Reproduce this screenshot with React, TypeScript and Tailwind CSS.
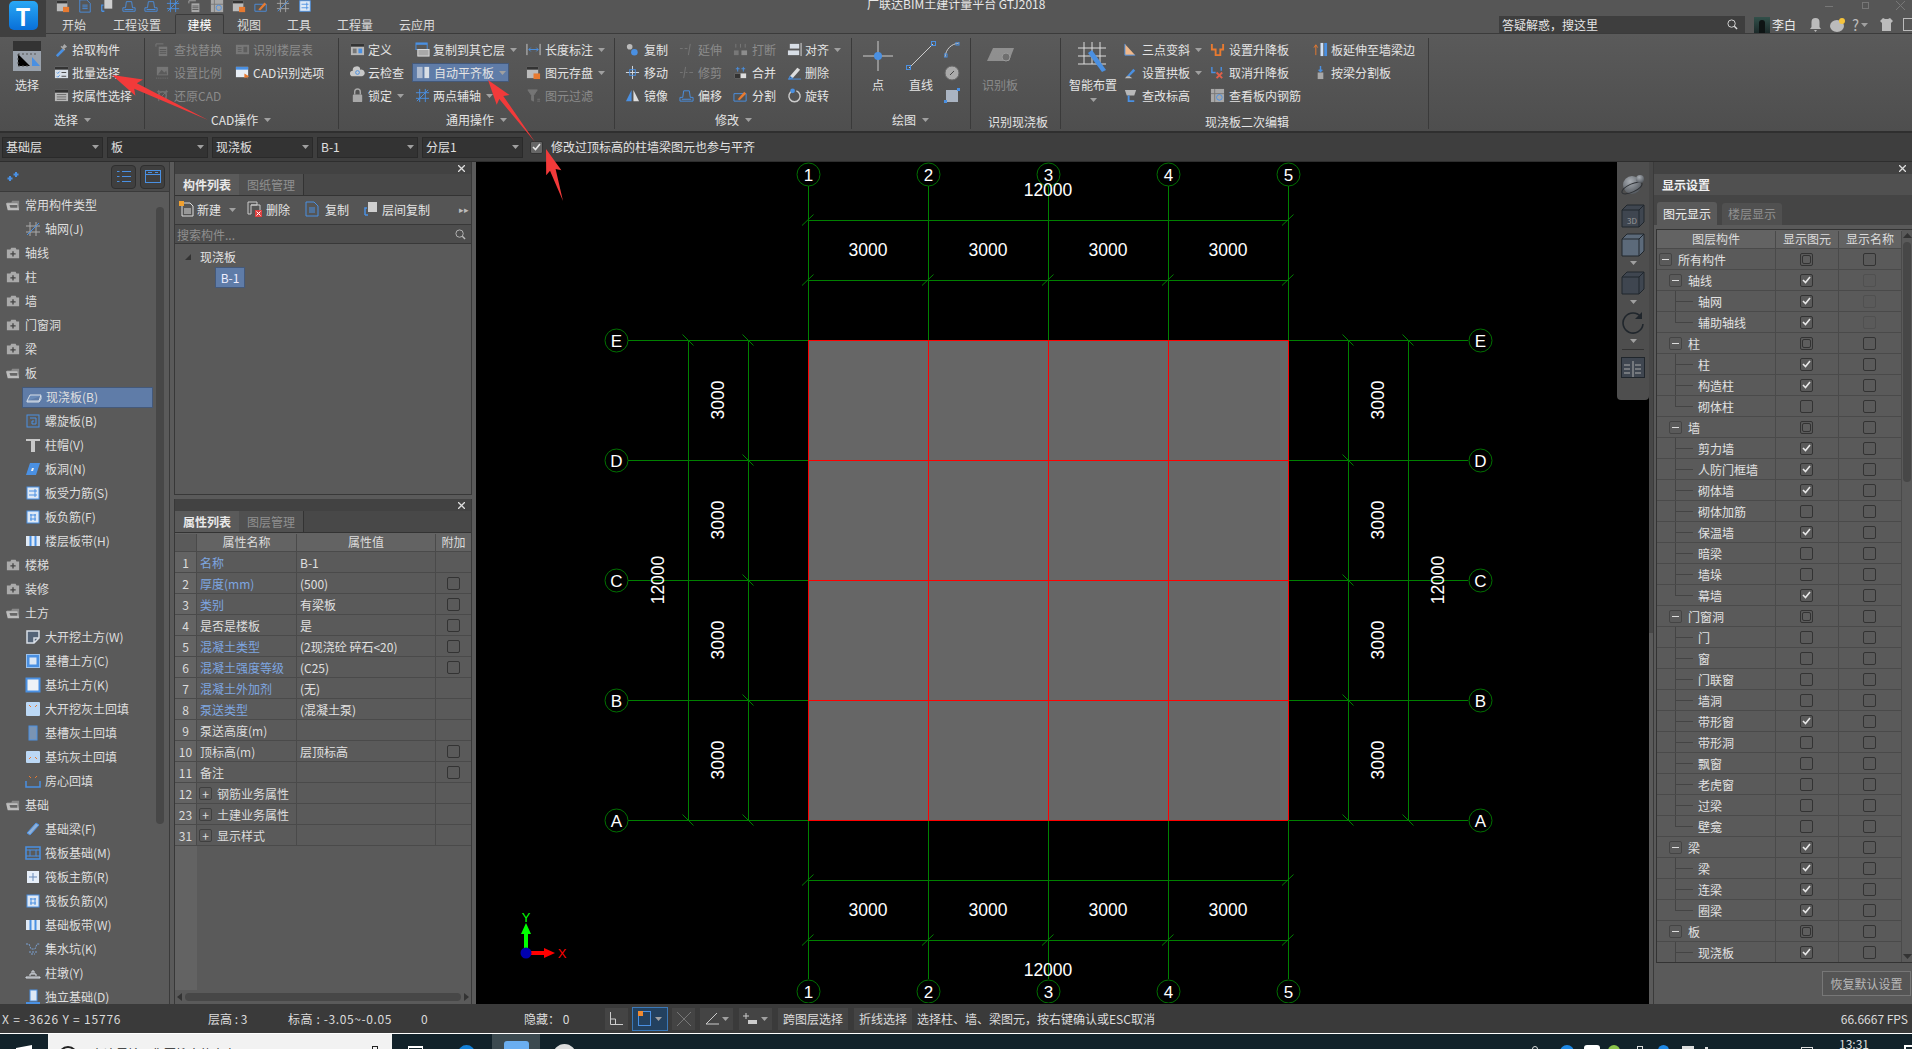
import type { ReactNode } from "react";

const BLUE = "#4a90e2";
const LIGHT = "#d8dee6";
const GRAY = "#a8a8a8";

const Caret = ({ className = "" }: { className?: string }) => (
  <svg width="7" height="4" viewBox="0 0 7 4" className={`shrink-0 ${className}`}>
    <path d="M0 0h7L3.5 4z" fill="#a0a0a0" />
  </svg>
);

const Svg = ({ children, size = 16 }: { children: ReactNode; size?: number }) => (
  <svg width={size} height={size} viewBox="0 0 16 16" fill="none" strokeWidth="1">
    {children}
  </svg>
);

// ribbon and tree icons, hand drawn on a 16 box
const icons: Record<string, ReactNode> = {
  pick: (
    <>
      <path d="M2 14l7-7 2 2-7 7z" fill={BLUE} />
      <path d="M9 5l2-3 3 3-3 2 1 1-1 1-4-4 1-1z" fill={GRAY} />
    </>
  ),
  batch: (
    <>
      <rect x="1" y="2" width="14" height="12" fill={LIGHT} />
      <rect x="1" y="2" width="14" height="3" fill="#333" />
      <path d="M3 8l1 1 2-2M3 12l1 1 2-2" stroke={BLUE} />
      <path d="M8 8h5M8 12h5" stroke="#444" />
    </>
  ),
  attr: (
    <>
      <rect x="1" y="2" width="14" height="12" fill="#b8b8b8" />
      <rect x="1" y="2" width="14" height="3" fill="#333" />
      <path d="M3 7h10M3 9.500h10M3 12h10" stroke="#666" />
    </>
  ),
  find: (
    <>
      <rect x="4" y="5" width="9" height="10" fill={GRAY} />
      <path d="M5 8h7M5 10h7M5 12h7" stroke="#555" />
      <path d="M1 2h8M1 2v3" stroke={GRAY} />
    </>
  ),
  floorTable: (
    <>
      <rect x="1" y="3" width="14" height="10" fill={GRAY} />
      <rect x="9" y="5" width="4" height="6" fill="#666" />
      <path d="M3 6h4M3 8h4M3 10h4" stroke="#666" />
    </>
  ),
  scale: (
    <>
      <rect x="2" y="2" width="12" height="9" fill={GRAY} />
      <path d="M3 10l4-5 3 3 2-2 1 4z" fill="#666" />
      <path d="M1 14h14" stroke={GRAY} strokeDasharray="1 1" />
    </>
  ),
  cadOpt: (
    <>
      <rect x="1" y="2" width="13" height="11" fill="#e8eef5" />
      <rect x="1" y="2" width="13" height="3" fill={BLUE} />
      <path d="M10 9l5 3-2 1 1 2-2-2-2 1z" fill="#e87a30" />
    </>
  ),
  restore: (
    <>
      <path d="M4 2v12M2 4h12M12 2v12M4 12l8-8" stroke={GRAY} />
      <circle cx="8" cy="8" r="4" stroke={GRAY} />
    </>
  ),
  define: (
    <>
      <rect x="1" y="2" width="14" height="12" fill="#b8b8b8" />
      <rect x="1" y="2" width="14" height="3" fill="#333" />
      <rect x="3" y="7" width="4" height="5" fill="#777" />
      <rect x="9" y="7" width="4" height="5" fill={BLUE} />
    </>
  ),
  cloud: (
    <>
      <path d="M3 12a3 3 0 010-6 4 4 0 018-1 3.500 3.500 0 012 7z" fill="#c8c8c8" />
      <circle cx="8" cy="8" r="2" stroke={BLUE} />
    </>
  ),
  lock: (
    <>
      <rect x="3" y="7" width="10" height="8" rx="1" fill={GRAY} />
      <path d="M5 7V4a3 3 0 016 0v3" stroke={GRAY} strokeWidth="1.500" />
    </>
  ),
  copyFloor: (
    <>
      <rect x="1" y="1" width="12" height="7" stroke={BLUE} />
      <rect x="1" y="1" width="12" height="2" fill={BLUE} />
      <rect x="3" y="8" width="12" height="7" fill={GRAY} stroke="#ddd" />
    </>
  ),
  autoSlab: (
    <>
      <rect x="1" y="2" width="6" height="12" fill="#aebbd0" />
      <rect x="9" y="2" width="5" height="12" fill="#d8dee6" />
    </>
  ),
  twoAxis: <path d="M1 5h14M1 11h14M5 1v14M11 1v14M2 14L14 2" stroke={BLUE} />,
  length: (
    <>
      <path d="M1 2v12M15 2v12" stroke="#ccc" />
      <path d="M3 8h10M3 8l2-2M3 8l2 2M13 8l-2-2M13 8l-2 2" stroke={BLUE} />
    </>
  ),
  saveEl: (
    <>
      <rect x="1" y="2" width="12" height="12" fill="#bbb" />
      <rect x="1" y="2" width="12" height="3" fill="#333" />
      <rect x="8" y="9" width="7" height="6" fill="#e87a30" />
    </>
  ),
  filter: <path d="M2 2h10L8 8v6l-2-1V8zM12 12h3M12 14h3" fill={GRAY} stroke={GRAY} />,
  copy: (
    <>
      <circle cx="5" cy="5" r="3" fill="#bbb" />
      <circle cx="10" cy="11" r="3.500" fill={BLUE} />
    </>
  ),
  extend: <path d="M1 7h3M6 7h3M12 2l-2 12" stroke={GRAY} />,
  breakEl: (
    <>
      <rect x="1" y="9" width="5" height="5" fill={GRAY} />
      <rect x="9" y="9" width="6" height="5" fill="#ddd" />
      <path d="M3 2v4M8 2v4M13 2v4" stroke={GRAY} />
    </>
  ),
  alignR: (
    <>
      <rect x="3" y="2" width="10" height="5" fill={LIGHT} />
      <rect x="1" y="9" width="12" height="5" fill={LIGHT} />
      <path d="M15 1v14" stroke="#ddd" />
    </>
  ),
  move: (
    <>
      <path d="M8 1v14M1 8h14" stroke={LIGHT} />
      <rect x="5" y="5" width="6" height="6" stroke={BLUE} />
    </>
  ),
  trim: <path d="M1 8h3M7 8h2M11 8h4M7 2L5 14" stroke={GRAY} />,
  merge: (
    <>
      <rect x="2" y="9" width="12" height="5" fill="#ddd" />
      <rect x="2" y="9" width="6" height="5" fill="#333" />
      <path d="M5 2v5M11 2v5M3 4h4M9 4h4" stroke={BLUE} />
    </>
  ),
  del: (
    <>
      <path d="M3 12l8-9 3 2-8 9z" fill="#ddd" />
      <path d="M3 12l3 2-4 1zM1 15h14" stroke={BLUE} />
    </>
  ),
  mirror: (
    <>
      <path d="M7 2v12H1z" fill={BLUE} />
      <path d="M9 2v12h6z" fill="#ddd" />
    </>
  ),
  offset: <path d="M1 14h14v-4h-3l-1-7H5L4 10H1zM3 12h10" stroke={BLUE} />,
  split: (
    <>
      <path d="M1 14h13V6H1z" stroke={BLUE} />
      <path d="M5 12l7-8 2 2-7 7z" fill="#e87a30" />
    </>
  ),
  rotate: (
    <>
      <path d="M6 3a6 6 0 104 0" stroke="#ccc" strokeWidth="1.500" />
      <circle cx="6" cy="3" r="2.500" fill={BLUE} />
    </>
  ),
  three: (
    <>
      <path d="M2 2l11 12H2z" fill="#f0b88a" />
      <path d="M2 2v12h11" stroke={BLUE} />
    </>
  ),
  arch: (
    <>
      <path d="M4 12l7-8 2 2-6 6z" fill={BLUE} />
      <path d="M2 14h8l-3-2H4z" fill="#bbb" />
    </>
  ),
  checkEl: (
    <>
      <path d="M2 2h12l-2 6H4z" fill="#b8b8b8" />
      <path d="M6 8v6h6" stroke={BLUE} strokeWidth="2" />
    </>
  ),
  lift: <path d="M2 2v6h4v6h5V8h3V2" stroke="#e87a30" strokeWidth="2" />,
  unlift: (
    <>
      <path d="M2 2v6h4M12 2v4" stroke={BLUE} strokeWidth="1.500" />
      <path d="M7 8l6 6M13 8l-6 6" stroke="#e0604a" strokeWidth="2" />
    </>
  ),
  viewBar: (
    <>
      <rect x="1" y="1" width="14" height="14" fill={GRAY} />
      <path d="M5 1v14M1 6h14" stroke="#777" />
      <circle cx="10" cy="10" r="3" stroke={BLUE} />
    </>
  ),
  toWall: (
    <>
      <path d="M3 14V3M3 3L1 6M3 3l2 3" stroke="#e87a30" />
      <rect x="8" y="1" width="3" height="14" fill="#cfe0f5" />
      <rect x="12" y="1" width="3" height="14" fill={BLUE} />
    </>
  ),
  byBeam: (
    <>
      <path d="M8 1v6M6 5l2 2 2-2" stroke={BLUE} strokeWidth="1.500" />
      <rect x="5" y="8" width="6" height="7" fill={GRAY} />
    </>
  ),
  // tree
  axisGrid: (
    <>
      <path d="M1 5h14M1 11h14M5 1v14M11 1v14" stroke="#aaa" />
      <path d="M2 14L14 2" stroke={BLUE} />
    </>
  ),
  slab: <path d="M1 12l3-6h11l-2 6zM1 12v1h12l2-3V7" stroke={LIGHT} fill="#6a8bb8" />,
  spiral: (
    <>
      <rect x="2" y="2" width="12" height="12" stroke={BLUE} />
      <path d="M5 5h6v6H7V8h2" stroke={BLUE} />
    </>
  ),
  cap: <path d="M1 2h14v2H10v11H6V4H1z" fill="#c8c8c8" />,
  hole: (
    <>
      <path d="M5 2h10l-4 12H1z" fill={BLUE} />
      <path d="M7 7h2l-1 3H6z" fill="#eee" />
    </>
  ),
  barA: (
    <>
      <rect x="2" y="2" width="12" height="12" fill="#dfe9f5" stroke={BLUE} />
      <path d="M4 6h8M4 10h8M10 4v8" stroke={BLUE} />
    </>
  ),
  barB: (
    <>
      <rect x="2" y="2" width="12" height="12" fill="#dfe9f5" stroke={BLUE} />
      <path d="M5 6h6M5 10h6M6 5v7M10 5v7" stroke={BLUE} />
    </>
  ),
  strip: (
    <>
      <rect x="1" y="3" width="14" height="10" fill="#dfe9f5" />
      <path d="M5.500 3v10M10.500 3v10" stroke={BLUE} strokeWidth="2" />
    </>
  ),
  earthA: <path d="M2 2h12v7l-5 5H2zM9 14V9h5" stroke={LIGHT} strokeWidth="1.500" fill="#4a7fc0" fillOpacity="0.3" />,
  earthB: (
    <>
      <rect x="1.500" y="1.500" width="13" height="13" fill="#4a90e2" stroke="#9cc3ee" />
      <rect x="4.500" y="4.500" width="7" height="7" fill="#dde8f5" />
    </>
  ),
  earthC: (
    <>
      <rect x="1.500" y="1.500" width="13" height="13" fill="#eef2f7" stroke={BLUE} strokeWidth="2" />
    </>
  ),
  fillA: (
    <>
      <rect x="1" y="1" width="14" height="14" rx="1" fill="#bcd8f5" />
      <path d="M4 4l2 2M12 4l-2 2" stroke="#e87a30" />
    </>
  ),
  fillB: <rect x="4" y="1" width="8" height="14" fill="#7a94b4" stroke={BLUE} />,
  fillC: (
    <>
      <rect x="1" y="2" width="14" height="12" rx="1" fill="#bcd8f5" />
      <path d="M4 10l2-2M12 10l-2-2" stroke="#e87a30" />
    </>
  ),
  fillD: (
    <>
      <path d="M1 8v6h14V8" stroke={BLUE} strokeWidth="1.500" />
      <path d="M4 3l2 2M12 3l-2 2" stroke="#e87a30" />
    </>
  ),
  beamF: <path d="M2 12L11 2l3 2-9 10z" stroke={BLUE} fill="#8fb0d8" />,
  raft: (
    <>
      <rect x="1" y="2" width="14" height="12" stroke={BLUE} strokeWidth="1.500" />
      <rect x="5" y="5" width="6" height="6" stroke={BLUE} />
      <path d="M1 5h4M11 5h4M1 11h4M11 11h4" stroke={BLUE} />
    </>
  ),
  raftBar: (
    <>
      <rect x="2" y="2" width="12" height="12" fill="#e6eef8" />
      <path d="M8 4v8M4 8h8" stroke="#6a8bb8" />
    </>
  ),
  sump: <path d="M1 3h3l2 5h4l2-5h3M4 11h8M6 13h4" stroke="#7aa0d0" strokeDasharray="2 1" />,
  pier: <path d="M1 12h14v1H1zM5 11V9h6v2M7 9V6h2v3" stroke={LIGHT} />,
  footing: (
    <>
      <rect x="5" y="1" width="7" height="11" fill="#dde8f5" stroke={BLUE} />
      <path d="M1 14h14" stroke={BLUE} strokeWidth="2" />
    </>
  ),
  folderOpen: (
    <>
      <path d="M1 5h5l1-2h8v10H2z" fill="#8a8a8a" />
      <path d="M0 6h13l2 8H2z" fill="#bdbdbd" />
      <path d="M4 8h9v3H5z" fill="#666" />
    </>
  ),
  folderPlus: (
    <>
      <path d="M1 4h4l1-2h5l1 2h3v10H1z" fill="#aaa" />
      <path d="M8 6v6M5 9h6" stroke="#444" strokeWidth="1.500" />
    </>
  ),
  newDoc: (
    <>
      <path d="M3 2h8l3 3v10H3z" stroke="#ddd" />
      <path d="M5 8h7M5 10h7M5 12h7" stroke="#ddd" />
      <rect x="0" y="0" width="5" height="5" fill="#f0a030" />
    </>
  ),
  delDoc: (
    <>
      <path d="M1 1h9v3H4v9H1zM4 4h9v5" stroke="#ccc" />
      <rect x="8" y="9" width="7" height="7" fill="#e04040" />
      <path d="M9.500 10.500l4 4M13.500 10.500l-4 4" stroke="#fff" />
    </>
  ),
  copyDoc: (
    <>
      <path d="M2 1h8l4 4v10H2z" stroke={BLUE} />
      <path d="M5 7h6M5 9h6M5 11h6" stroke={BLUE} />
    </>
  ),
  floorCopy: (
    <>
      <path d="M2 14h3M2 14V7h2" stroke={BLUE} strokeWidth="1.500" />
      <rect x="5" y="1" width="9" height="10" fill="#cfcfcf" />
    </>
  ),
};

const Icon = ({ name, dim = false, size = 16 }: { name: string; dim?: boolean; size?: number }) => (
  <span className={`inline-flex shrink-0 ${dim ? "opacity-40" : ""}`}>
    <Svg size={size}>{icons[name]}</Svg>
  </span>
);

type Item = { icon: string; text: string; caret?: boolean; dim?: boolean; active?: boolean };

const RibbonCol = ({ items, className, slot }: { items: (Item | null)[]; className: string; slot: string }) => (
  <div className={`flex flex-col shrink-0 ${className}`}>
    {items.map((it, i) =>
      it ? (
        <div
          key={i}
          className={`flex items-center whitespace-nowrap ${it.dim ? "text-[#8b8b8b]" : "text-[#e4e4e4]"} ${
            it.active ? "bg-[#5f7ca8] border border-[#44597a] h-[19px] my-[2px]" : "h-[23px]"
          }`}
        >
          <span className={`flex shrink-0 ${slot}`}>
            <Icon name={it.icon} dim={it.dim} size={15} />
          </span>
          <span>{it.text}</span>
          {it.caret && <Caret className="ml-[5px]" />}
        </div>
      ) : (
        <div key={i} className="h-[23px]" />
      )
    )}
  </div>
);

const GroupLabel = ({ text, caret = true, className }: { text: string; caret?: boolean; className: string }) => (
  <div className={`flex items-center h-[14px] gap-[6px] text-[#e4e4e4] whitespace-nowrap ${className}`}>
    <span>{text}</span>
    {caret && <Caret />}
  </div>
);

const Group = ({ width, label, children }: { width: string; label: ReactNode; children: ReactNode }) => (
  <div className={`flex flex-col shrink-0 border-r border-[#3a3a3a] h-[91px] ${width}`}>
    <div className="flex h-[72px]">{children}</div>
    {label}
  </div>
);

const BigBtn = ({ label, className, dim, children }: { label: string; className: string; dim?: boolean; children: ReactNode }) => (
  <div className={`flex flex-col items-center shrink-0 ${className}`}>
    <div className={`h-[36px] flex items-center ${dim ? "opacity-50" : ""}`}>{children}</div>
    <span className={`mt-[3px] whitespace-nowrap ${dim ? "text-[#8b8b8b]" : "text-[#e4e4e4]"}`}>{label}</span>
  </div>
);

const TitleBar = () => (
  <div className="flex h-[34px] shrink-0 bg-[#565656] border-b border-[#3b3b3b]">
    <div className="w-[46px] h-[37px] z-10 bg-[#3f3f3f] flex justify-center shrink-0">
      <div className="w-[29px] h-[29px] mt-[1px] rounded-[5px] bg-gradient-to-b from-[#2aa8f5] to-[#0a6fd8] flex items-center justify-center">
        <span className="text-white font-bold text-[24px] leading-none">T</span>
      </div>
    </div>
    <div className="flex-1 flex flex-col min-w-0">
      <div className="flex h-[17px] overflow-hidden">
        <div className="flex items-center gap-[8px] ml-[10px] w-[811px] shrink-0 -mt-[4px]">
          {["saveEl", "copyDoc", "floorCopy", "offset", "offset", "twoAxis", "find", "viewBar", "saveEl", "split", "axisGrid", "barA"].map((n, i) => (
            <Icon key={i} name={n} size={14} />
          ))}
        </div>
        <div className="w-[400px] shrink-0 -mt-[3px] h-[14px] leading-[14px] text-[#e8e8e8] whitespace-nowrap">广联达BIM土建计量平台 GTJ2018</div>
        <div className="flex-1 flex items-start justify-end pt-[1px] text-[#777]">
          <span className="w-[8px] h-px bg-[#777] mt-[5px] mr-[29px]" />
          <span className="w-[7px] h-[7px] border border-[#777] mt-[1px] mr-[27px]" />
          <svg width="9" height="9" viewBox="0 0 9 9" className="mr-[7px]">
            <path d="M0 0l9 9M9 0l-9 9" stroke="#777" />
          </svg>
        </div>
      </div>
      <div className="flex items-end h-[17px] text-[#dcdcdc]">
        <span className="ml-[16px] w-[51px] leading-[17px]">开始</span>
        <span className="w-[62px] leading-[17px]">工程设置</span>
        <span className="w-[49px] h-[20px] -mb-px leading-[20px] text-center bg-[#565656] border border-b-0 border-[#3b3b3b] text-white rounded-t-[2px]">建模</span>
        <span className="ml-[13px] w-[50px] leading-[17px]">视图</span>
        <span className="w-[50px] leading-[17px]">工具</span>
        <span className="w-[62px] leading-[17px]">工程量</span>
        <span className="leading-[17px]">云应用</span>
        <div className="ml-auto flex items-center h-[17px] w-[413px] shrink-0">
          <div className="w-[246px] h-[17px] shrink-0 bg-[#3e3e3e] flex items-center justify-between pl-[3px] pr-[7px] text-[#e4e4e4]">
            <span>答疑解惑，搜这里</span>
            <svg width="11" height="11" viewBox="0 0 12 12">
              <circle cx="5" cy="5" r="4" stroke="#ddd" fill="none" />
              <path d="M8 8l3 3" stroke="#ddd" strokeWidth="1.500" />
            </svg>
          </div>
          <span className="w-[16px] h-[16px] ml-[9px] shrink-0 bg-gradient-to-b from-[#32504a] to-[#1c2a2a] flex justify-center">
            <span className="w-[6px] h-[13px] mt-[3px] bg-[#0e1414] rounded-t-[3px]" />
          </span>
          <span className="ml-[2px] w-[24px] shrink-0 whitespace-nowrap text-[#eee]">李白</span>
          <svg width="13" height="16" viewBox="0 0 13 16" className="ml-[13px] shrink-0">
            <path d="M6.500 1a4 4 0 00-4 4v5L1 12h11l-1.500-2V5a4 4 0 00-4-4zM5 13h3l-1.500 2z" fill="#bbb" />
          </svg>
          <svg width="16" height="16" viewBox="0 0 16 16" className="ml-[8px] shrink-0">
            <ellipse cx="7" cy="9" rx="7" ry="6" fill="#bbb" />
            <circle cx="12" cy="4" r="3" fill="#f5c33b" />
          </svg>
          <span className="ml-[6px] shrink-0 text-[#bbb] text-[15px] leading-none">?</span>
          <Caret className="ml-[2px]" />
          <svg width="13" height="13" viewBox="0 0 13 13" className="ml-[12px] shrink-0">
            <path d="M3 0L0 3l2 2v8h9V5l2-2-3-3-2 1H5z" fill="#bbb" />
          </svg>
          <span className="w-[14px] h-[13px] ml-[10px] border border-[#bbb] border-r-0 shrink-0" />
        </div>
      </div>
    </div>
  </div>
);

const Ribbon = () => (
  <div className="flex h-[99px] shrink-0 pt-[4px] bg-gradient-to-b from-[#5a5a5a] to-[#4e4e4e] border-b-2 border-[#2f2f2f]">
    <Group width="w-[145px]" label={<GroupLabel text="选择" className="ml-[54px] mt-[3px]" />}>
      <BigBtn label="选择" className="w-[54px]">
        <svg width="28" height="30" viewBox="0 0 28 30">
          <rect width="28" height="30" fill="#9aa2ac" />
          <rect width="28" height="10" fill="#333" />
          <path d="M5 13h18" stroke="#555" strokeDasharray="2 2" />
          <path d="M5 13v12h12" stroke="#555" strokeDasharray="2 2" />
          <path d="M19 16l8 9h-8z" fill={BLUE} />
        </svg>
      </BigBtn>
      <RibbonCol
        slot="w-[18px]"
        className="w-[90px]"
        items={[
          { icon: "pick", text: "拾取构件" },
          { icon: "batch", text: "批量选择" },
          { icon: "attr", text: "按属性选择" },
        ]}
      />
    </Group>
    <Group width="w-[194px]" label={<GroupLabel text="CAD操作" className="ml-[66px] mt-[3px]" />}>
      <RibbonCol
        slot="w-[19px]"
        className="ml-[10px] w-[80px]"
        items={[
          { icon: "find", text: "查找替换", dim: true },
          { icon: "scale", text: "设置比例", dim: true },
          { icon: "restore", text: "还原CAD", dim: true },
        ]}
      />
      <RibbonCol
        slot="w-[18px]"
        className="w-[90px]"
        items={[{ icon: "floorTable", text: "识别楼层表", dim: true }, { icon: "cadOpt", text: "CAD识别选项" }, null]}
      />
    </Group>
    <Group width="w-[276px]" label={<GroupLabel text="通用操作" className="ml-[107px] mt-[3px]" />}>
      <RibbonCol
        slot="w-[18px]"
        className="ml-[11px] w-[62px]"
        items={[
          { icon: "define", text: "定义" },
          { icon: "cloud", text: "云检查" },
          { icon: "lock", text: "锁定", caret: true },
        ]}
      />
      <RibbonCol
        slot="w-[21px] pl-[3px]"
        className="w-[114px] pr-[17px]"
        items={[
          { icon: "copyFloor", text: "复制到其它层", caret: true },
          { icon: "autoSlab", text: "自动平齐板", caret: true, active: true },
          { icon: "twoAxis", text: "两点辅轴", caret: true },
        ]}
      />
      <RibbonCol
        slot="w-[19px]"
        className="w-[85px]"
        items={[
          { icon: "length", text: "长度标注", caret: true },
          { icon: "saveEl", text: "图元存盘", caret: true },
          { icon: "filter", text: "图元过滤", dim: true },
        ]}
      />
    </Group>
    <Group width="w-[237px]" label={<GroupLabel text="修改" className="ml-[100px] mt-[3px]" />}>
      <RibbonCol
        slot="w-[19px]"
        className="ml-[10px] w-[54px]"
        items={[
          { icon: "copy", text: "复制" },
          { icon: "move", text: "移动" },
          { icon: "mirror", text: "镜像" },
        ]}
      />
      <RibbonCol
        slot="w-[19px]"
        className="w-[54px]"
        items={[
          { icon: "extend", text: "延伸", dim: true },
          { icon: "trim", text: "修剪", dim: true },
          { icon: "offset", text: "偏移" },
        ]}
      />
      <RibbonCol
        slot="w-[19px]"
        className="w-[54px]"
        items={[
          { icon: "breakEl", text: "打断", dim: true },
          { icon: "merge", text: "合并" },
          { icon: "split", text: "分割" },
        ]}
      />
      <RibbonCol
        slot="w-[18px]"
        className="w-[60px]"
        items={[
          { icon: "alignR", text: "对齐", caret: true },
          { icon: "del", text: "删除" },
          { icon: "rotate", text: "旋转" },
        ]}
      />
    </Group>
    <Group width="w-[119px]" label={<GroupLabel text="绘图" className="ml-[40px] mt-[3px]" />}>
      <BigBtn label="点" className="w-[52px]">
        <svg width="30" height="30" viewBox="0 0 30 30">
          <path d="M15 0v30M0 15h30" stroke="#ccc" />
          <circle cx="15" cy="15" r="4" fill={BLUE} />
        </svg>
      </BigBtn>
      <BigBtn label="直线" className="w-[34px]">
        <svg width="30" height="30" viewBox="0 0 30 30">
          <path d="M3 27L27 3" stroke="#ccc" />
          <rect x="0.500" y="24.500" width="4" height="4" stroke={BLUE} fill="none" />
          <rect x="25.500" y="0.500" width="4" height="4" stroke={BLUE} fill="none" />
        </svg>
      </BigBtn>
      <div className="flex flex-col w-[18px] ml-[6px] shrink-0">
        {[
          <g key="a">
            <path d="M1 15C2 7 7 2 15 1" stroke="#ccc" />
            <rect x="0" y="12" width="3" height="3" stroke={BLUE} />
            <rect x="12" y="0" width="3" height="3" stroke={BLUE} />
          </g>,
          <g key="b">
            <circle cx="8" cy="8" r="7" fill="#aaa" stroke="#666" />
            <path d="M6 10l4-4" stroke="#444" />
          </g>,
          <g key="c">
            <rect x="2" y="2" width="12" height="12" fill="#aab4c2" />
            <rect x="0" y="12" width="3" height="3" fill={BLUE} />
            <rect x="13" y="0" width="3" height="3" fill={BLUE} />
          </g>,
        ].map((s, i) => (
          <div key={i} className="h-[23px] flex items-center">
            <Svg>{s}</Svg>
          </div>
        ))}
      </div>
    </Group>
    <Group width="w-[90px]" label={<GroupLabel text="识别现浇板" caret={false} className="ml-[17px] mt-[6px]" />}>
      <BigBtn label="识别板" dim className="w-[58px]">
        <svg width="27" height="16" viewBox="0 0 27 16">
          <path d="M6 0h21l-5 13H0z" fill="#c8c8c8" />
          <circle cx="19" cy="9" r="4" fill="#888" stroke="#ddd" />
        </svg>
      </BigBtn>
    </Group>
    <Group width="w-[368px]" label={<GroupLabel text="现浇板二次编辑" caret={false} className="ml-[144px] mt-[6px]" />}>
      <div className="flex flex-col items-center w-[48px] ml-[8px] shrink-0">
        <div className="h-[36px] flex items-center">
          <svg width="30" height="32" viewBox="0 0 30 32">
            <path d="M6 2v22M14 2v22M22 2v22M0 8h28M0 16h28M0 24h28" stroke="#ddd" />
            <path d="M10 13l4-3 14 20-4 2z" fill={BLUE} />
          </svg>
        </div>
        <span className="mt-[3px] whitespace-nowrap text-[#e4e4e4]">智能布置</span>
        <Caret className="mt-[5px]" />
      </div>
      <RibbonCol
        slot="w-[19px]"
        className="ml-[6px] w-[87px]"
        items={[
          { icon: "three", text: "三点变斜", caret: true },
          { icon: "arch", text: "设置拱板", caret: true },
          { icon: "checkEl", text: "查改标高" },
        ]}
      />
      <RibbonCol
        slot="w-[19px]"
        className="w-[103px]"
        items={[
          { icon: "lift", text: "设置升降板" },
          { icon: "unlift", text: "取消升降板" },
          { icon: "viewBar", text: "查看板内钢筋" },
        ]}
      />
      <RibbonCol
        slot="w-[18px]"
        className="w-[100px]"
        items={[{ icon: "toWall", text: "板延伸至墙梁边" }, { icon: "byBeam", text: "按梁分割板" }, null]}
      />
    </Group>
  </div>
);

const Combo = ({ text }: { text: string }) => (
  <div className="w-[101px] h-[21px] flex items-center justify-between pl-[3px] pr-[3px] bg-[#333333] border border-[#2a2a2a] text-[#e0e0e0] shrink-0">
    <span>{text}</span>
    <Caret />
  </div>
);

const CheckBox = ({ on, mid, faint, className = "" }: { on?: boolean; mid?: boolean; faint?: boolean; className?: string }) => (
  <span
    className={`w-[13px] h-[13px] shrink-0 rounded-[2px] border flex items-center justify-center ${
      faint ? "border-[#505050]" : "border-[#333]"
    } ${className}`}
  >
    {on && (
      <svg width="9" height="8" viewBox="0 0 9 8">
        <path d="M1 4l2.500 2.500L8 1" stroke="#e8e8e8" strokeWidth="1.600" fill="none" />
      </svg>
    )}
    {mid && <span className="w-[9px] h-[9px] rounded-[2px] border border-[#333] bg-[#5e5e5e]" />}
  </span>
);

const FilterBar = () => (
  <div className="flex items-center h-[29px] shrink-0 bg-[#3e3e3e] pl-[2px] gap-[4px] border-b border-[#2e2e2e]">
    {["基础层", "板", "现浇板", "B-1", "分层1"].map((t) => (
      <Combo key={t} text={t} />
    ))}
    <CheckBox on className="ml-[3px] bg-[#666]" />
    <span className="ml-[4px] text-[#e4e4e4] whitespace-nowrap">修改过顶标高的柱墙梁图元也参与平齐</span>
  </div>
);

type TreeRow = { t: string; i?: string; open?: boolean; sel?: boolean };
const tree: TreeRow[] = [
  { t: "常用构件类型", open: true },
  { t: "轴网(J)", i: "axisGrid" },
  { t: "轴线" },
  { t: "柱" },
  { t: "墙" },
  { t: "门窗洞" },
  { t: "梁" },
  { t: "板", open: true },
  { t: "现浇板(B)", i: "slab", sel: true },
  { t: "螺旋板(B)", i: "spiral" },
  { t: "柱帽(V)", i: "cap" },
  { t: "板洞(N)", i: "hole" },
  { t: "板受力筋(S)", i: "barA" },
  { t: "板负筋(F)", i: "barB" },
  { t: "楼层板带(H)", i: "strip" },
  { t: "楼梯" },
  { t: "装修" },
  { t: "土方", open: true },
  { t: "大开挖土方(W)", i: "earthA" },
  { t: "基槽土方(C)", i: "earthB" },
  { t: "基坑土方(K)", i: "earthC" },
  { t: "大开挖灰土回填", i: "fillA" },
  { t: "基槽灰土回填", i: "fillB" },
  { t: "基坑灰土回填", i: "fillC" },
  { t: "房心回填", i: "fillD" },
  { t: "基础", open: true },
  { t: "基础梁(F)", i: "beamF" },
  { t: "筏板基础(M)", i: "raft" },
  { t: "筏板主筋(R)", i: "raftBar" },
  { t: "筏板负筋(X)", i: "barB" },
  { t: "基础板带(W)", i: "strip" },
  { t: "集水坑(K)", i: "sump" },
  { t: "柱墩(Y)", i: "pier" },
  { t: "独立基础(D)", i: "footing" },
];

const LeftPanel = () => (
  <div className="w-[170px] shrink-0 flex flex-col bg-[#5a5a5a] border-r border-[#3a3a3a] overflow-hidden">
    <div className="h-[30px] shrink-0 flex items-center bg-[#4b4b4b] border-b border-[#3a3a3a] pl-[7px]">
      <svg width="13" height="11" viewBox="0 0 13 11">
        <path d="M3 5v5M0.500 7.500h5M9 1v5M6.500 3.500h5" stroke={BLUE} strokeWidth="2" />
      </svg>
      <span className="ml-auto w-[25px] h-[24px] rounded-[4px] border border-[#2f2f2f] bg-[#3f3f3f] flex items-center justify-center">
        <svg width="14" height="13" viewBox="0 0 14 13">
          <path d="M0 1.500h2.500M5 1.500h9M0 6.500h2.500M5 6.500h9M0 11.500h2.500M5 11.500h9" stroke={BLUE} />
        </svg>
      </span>
      <span className="ml-[4px] mr-[4px] w-[25px] h-[24px] rounded-[4px] border border-[#2f2f2f] bg-[#3f3f3f] flex items-center justify-center">
        <svg width="16" height="13" viewBox="0 0 16 13">
          <rect x="0.500" y="0.500" width="15" height="12" stroke={BLUE} fill="none" />
          <path d="M0 4.500h16M3 2.500h4M10 2.500h3" stroke={BLUE} />
        </svg>
      </span>
    </div>
    <div className="flex-1 flex min-h-0">
      <div className="w-[156px] shrink-0 pt-px">
        {tree.map((r) =>
          r.i ? (
            <div key={r.t} className="h-[24px] flex items-center pl-[22px]">
              <div
                className={`flex items-center h-[21px] w-[131px] shrink-0 pl-[3px] whitespace-nowrap text-[#dfdfdf] ${
                  r.sel ? "bg-[#5f7ca8] border border-[#44597a]" : ""
                }`}
              >
                <Icon name={r.i} />
                <span className="ml-[4px]">{r.t}</span>
              </div>
            </div>
          ) : (
            <div key={r.t} className="h-[24px] flex items-center pl-[6px] text-[#dfdfdf] whitespace-nowrap">
              <Icon name={r.open ? "folderOpen" : "folderPlus"} size={14} />
              <span className="ml-[5px]">{r.t}</span>
            </div>
          )
        )}
      </div>
      <div className="w-[8px] h-[617px] mt-[15px] rounded-[4px] bg-[#474747] shrink-0" />
    </div>
  </div>
);

const Closer = () => (
  <div className="h-[12px] shrink-0 bg-[#424242] flex items-center justify-end pr-[6px]">
    <svg width="7" height="7" viewBox="0 0 7 7">
      <path d="M0 0l7 7M7 0L0 7" stroke="#ddd" strokeWidth="1.300" />
    </svg>
  </div>
);

const PanelTabs = ({ a, b }: { a: string; b: string }) => (
  <div className="h-[22px] shrink-0 flex bg-[#484848] border-b border-[#333]">
    <span className="w-[64px] flex items-center justify-center bg-[#5a5a5a] font-bold text-[#e8e8e8]">{a}</span>
    <span className="w-[65px] flex items-center justify-center bg-[#505050] text-[#8f8f8f] border-r border-[#333]">{b}</span>
  </div>
);

type Prop = { n: number; name: string; val?: string; link?: boolean; box?: boolean; plus?: boolean };
const props: Prop[] = [
  { n: 1, name: "名称", val: "B-1", link: true },
  { n: 2, name: "厚度(mm)", val: "(500)", link: true, box: true },
  { n: 3, name: "类别", val: "有梁板", link: true, box: true },
  { n: 4, name: "是否是楼板", val: "是", box: true },
  { n: 5, name: "混凝土类型", val: "(2现浇砼 碎石<20)", link: true, box: true },
  { n: 6, name: "混凝土强度等级", val: "(C25)", link: true, box: true },
  { n: 7, name: "混凝土外加剂", val: "(无)", link: true },
  { n: 8, name: "泵送类型", val: "(混凝土泵)", link: true },
  { n: 9, name: "泵送高度(m)" },
  { n: 10, name: "顶标高(m)", val: "层顶标高", box: true },
  { n: 11, name: "备注", box: true },
  { n: 12, name: "钢筋业务属性", plus: true },
  { n: 23, name: "土建业务属性", plus: true },
  { n: 31, name: "显示样式", plus: true },
];

const MidPanel = () => (
  <div className="w-[298px] shrink-0 flex flex-col ml-[4px] gap-[4px]">
    <div className="h-[333px] flex flex-col bg-[#5a5a5a] border-x border-b border-[#383838]">
      <Closer />
      <PanelTabs a="构件列表" b="图纸管理" />
      <div className="h-[29px] shrink-0 flex items-center text-[#e4e4e4] border-b border-[#383838] bg-[#555]">
        <span className="ml-[4px]">
          <Icon name="newDoc" />
        </span>
        <span className="ml-[2px]">新建</span>
        <Caret className="ml-[8px]" />
        <span className="ml-[11px]">
          <Icon name="delDoc" />
        </span>
        <span className="ml-[3px]">删除</span>
        <span className="ml-[14px]">
          <Icon name="copyDoc" />
        </span>
        <span className="ml-[5px]">复制</span>
        <span className="ml-[14px]">
          <Icon name="floorCopy" />
        </span>
        <span className="ml-[3px]">层间复制</span>
        <span className="ml-auto mr-[2px] text-[#bbb] text-[9px]">▸▸</span>
      </div>
      <div className="h-[19px] shrink-0 flex items-center justify-between pl-[2px] pr-[5px] pt-px bg-[#4d4d4d] border-b border-[#383838] text-[#8f8f8f]">
        <span>搜索构件...</span>
        <svg width="11" height="11" viewBox="0 0 12 12">
          <circle cx="5" cy="5" r="4" stroke="#bbb" fill="none" />
          <path d="M8 8l3 3" stroke="#bbb" strokeWidth="1.500" />
        </svg>
      </div>
      <div className="flex items-center h-[21px] mt-[2px] text-[#e4e4e4]">
        <svg width="6" height="6" viewBox="0 0 6 6" className="ml-[10px]">
          <path d="M6 0v6H0z" fill="#333" />
        </svg>
        <span className="ml-[9px]">现浇板</span>
      </div>
      <div className="ml-[40px] w-[30px] h-[21px] flex items-center justify-center bg-[#5f7ca8] border border-[#44597a] text-[#eef]">B-1</div>
    </div>
    <div className="flex-1 flex flex-col bg-[#5a5a5a] border-x border-[#383838] min-h-0">
      <Closer />
      <PanelTabs a="属性列表" b="图层管理" />
      <div className="flex h-[19px] shrink-0 pt-px bg-[#636363] text-[#dcdcdc] border-b border-[#4a4a4a]">
        <span className="w-[22px] border-r border-[#4a4a4a] bg-[#5a5a5a]" />
        <span className="w-[100px] text-center border-r border-[#4a4a4a]">属性名称</span>
        <span className="w-[139px] text-center border-r border-[#4a4a4a]">属性值</span>
        <span className="flex-1 text-center">附加</span>
      </div>
      <div className="flex-1 flex flex-col min-h-0">
        {props.map((p) => (
          <div key={p.n} className="flex h-[21px] shrink-0 items-center border-b border-[#4a4a4a] whitespace-nowrap">
            <span className="w-[22px] h-full pt-px flex items-center justify-center bg-[#636363] border-r border-[#4a4a4a] text-[#dcdcdc]">{p.n}</span>
            <span className={`w-[100px] h-full pt-px flex items-center border-r border-[#4a4a4a] overflow-hidden ${p.link ? "text-[#7ea6e0]" : "text-[#dcdcdc]"} ${p.plus ? "pl-[2px]" : "pl-[3px]"}`}>
              {p.plus && (
                <span className="w-[13px] h-[13px] mr-[5px] shrink-0 rounded-[2px] border border-[#3f3f3f] flex items-center justify-center text-[#ddd] leading-none">+</span>
              )}
              {p.name}
            </span>
            <span className="w-[139px] h-full pt-px flex items-center pl-[3px] border-r border-[#4a4a4a] text-[#e0e0e0]">{p.val}</span>
            <span className="flex-1 flex justify-center">{p.box && <CheckBox />}</span>
          </div>
        ))}
        <div className="w-[22px] flex-1 bg-[#636363]" />
        <div className="h-[14px] shrink-0 flex items-center gap-[3px] px-[2px] bg-[#5a5a5a]">
          <svg width="5" height="8" viewBox="0 0 5 8">
            <path d="M5 0v8L0 4z" fill="#333" />
          </svg>
          <span className="flex-1 h-[8px] rounded-[4px] bg-[#474747]" />
          <svg width="5" height="8" viewBox="0 0 5 8">
            <path d="M0 0v8l5-4z" fill="#333" />
          </svg>
        </div>
      </div>
    </div>
  </div>
);

const Bubble = ({ x, y, t }: { x: number; y: number; t: string }) => (
  <g>
    <circle cx={x + 0.5} cy={y + 0.5} r="11.500" fill="#000" stroke="#007000" />
    <text x={x + 0.5} y={y + 6.5} textAnchor="middle" fill="#fff" fontSize="17">
      {t}
    </text>
  </g>
);

const Dim = ({ x, y, t, rot }: { x: number; y: number; t: string; rot?: boolean }) => (
  <text
    x={x}
    y={y}
    textAnchor="middle"
    dominantBaseline="central"
    fill="#fff"
    fontSize="17.500"
    transform={rot ? `rotate(-90 ${x} ${y})` : undefined}
  >
    {t}
  </text>
);

const ViewTools = () => (
  <div className="absolute left-[1141px] top-0 w-[32px] h-[238px] rounded-b-[4px] bg-[#4e4e4e] flex flex-col items-center">
    <svg width="24" height="24" viewBox="0 0 24 24" className="mt-[11px] shrink-0">
      <defs>
        <radialGradient id="ball" cx="0.4" cy="0.3" r="0.8">
          <stop offset="0" stopColor="#a8adb3" />
          <stop offset="1" stopColor="#4a4f55" />
        </radialGradient>
      </defs>
      <circle cx="11" cy="12" r="9" fill="url(#ball)" />
      <ellipse cx="11" cy="15" rx="11" ry="4" fill="none" stroke="#2c2f33" transform="rotate(-25 11 15)" />
      <circle cx="19" cy="6" r="4" fill="url(#ball)" />
    </svg>
    <span className="mt-[7px] flex">
      <Cube label="3D" />
    </span>
    <span className="mt-[5px] flex">
      <Cube fill="#5c6a7a" />
    </span>
    <Caret className="mt-[4px]" />
    <span className="mt-[6px] flex">
      <Cube />
    </span>
    <Caret className="mt-[5px]" />
    <svg width="24" height="24" viewBox="0 0 24 24" className="mt-[7px] shrink-0">
      <path d="M20 6a10 10 0 10 2 7" stroke="#20262c" strokeWidth="1.600" fill="none" />
      <path d="M21 1v7h-7z" fill="#20262c" />
    </svg>
    <Caret className="mt-[4px]" />
    <span className="w-[22px] h-px bg-[#333] mt-[6px] shrink-0" />
    <svg width="24" height="24" viewBox="0 0 24 24" className="mt-[5px] shrink-0">
      <rect x="0.500" y="2.500" width="23" height="20" fill="#3f4650" stroke="#20262c" />
      <path d="M3 10h6M3 14h6M3 18h6M14 10h6M14 14h6M14 18h6M12 6v16" stroke="#aaa" />
    </svg>
  </div>
);

const Cube = ({ label, fill = "#3f4650" }: { label?: string; fill?: string }) => (
  <svg width="24" height="24" viewBox="0 0 24 24" className="shrink-0">
    <path d="M1 6l5-5h17v17l-5 5H1z" fill={fill} stroke="#20262c" />
    <path d="M1 6h17v17M18 6l5-5" stroke="#20262c" fill="none" />
    {label && (
      <text x="11" y="20" fontSize="8" fill="#999" textAnchor="middle">
        {label}
      </text>
    )}
  </svg>
);

const Canvas = () => {
  const xs = [808, 928, 1048, 1168, 1288];
  const ys = [340, 460, 580, 700, 820];
  const letters = ["E", "D", "C", "B", "A"];
  const tickH = (x: number, y: number) => `M${x - 6} ${y + 5.500}L${x + 5.500} ${y - 5.500}`;
  const tickV = (x: number, y: number) => `M${x - 5.500} ${y - 5.500}L${x + 5.500} ${y + 5.500}`;
  return (
    <div className="relative flex-1 min-w-0 bg-black ml-[4px] overflow-hidden">
      <svg width="1174" height="841" viewBox="476 162 1174 841" className="block font-['Liberation_Sans',sans-serif]" shapeRendering="crispEdges">
        <rect x="808" y="340" width="480" height="480" fill="#666" />
        <g stroke="#008000" fill="none">
          {xs.map((x) => (
            <path key={x} d={`M${x + 0.5} 186V979`} />
          ))}
          {ys.map((y) => (
            <path key={y} d={`M628 ${y + 0.5}H1468`} />
          ))}
          {[220, 280, 880, 940].map((y) => (
            <path key={y} d={`M808 ${y + 0.5}H1288`} />
          ))}
          {[688, 748, 1348, 1408].map((x) => (
            <path key={x} d={`M${x + 0.5} 340V820`} />
          ))}
        </g>
        <g stroke="#ff0000" fill="none">
          {xs.map((x) => (
            <path key={x} d={`M${x + 0.5} 340V820`} />
          ))}
          {ys.map((y) => (
            <path key={y} d={`M808 ${y + 0.5}H1288`} />
          ))}
        </g>
        <g stroke="#008000" fill="none" shapeRendering="auto">
          {[220, 880].map((y) => [808, 1288].map((x) => <path key={`${x}-${y}`} d={tickH(x, y)} />))}
          {[280, 940].map((y) => xs.map((x) => <path key={`${x}-${y}`} d={tickH(x, y)} />))}
          {[688, 1408].map((x) => [340, 820].map((y) => <path key={`${x}-${y}`} d={tickV(x, y)} />))}
          {[748, 1348].map((x) => ys.map((y) => <path key={`${x}-${y}`} d={tickV(x, y)} />))}
        </g>
        <g shapeRendering="auto">
          {xs.map((x, i) => (
            <g key={x}>
              <Bubble x={x} y={174} t={String(i + 1)} />
              <Bubble x={x} y={991} t={String(i + 1)} />
            </g>
          ))}
          {ys.map((y, i) => (
            <g key={y}>
              <Bubble x={616} y={y} t={letters[i]} />
              <Bubble x={1480} y={y} t={letters[i]} />
            </g>
          ))}
          {[868, 988, 1108, 1228].map((x) => (
            <g key={x}>
              <Dim x={x} y={250} t="3000" />
              <Dim x={x} y={910} t="3000" />
            </g>
          ))}
          {[400, 520, 640, 760].map((y) => (
            <g key={y}>
              <Dim x={718} y={y} t="3000" rot />
              <Dim x={1378} y={y} t="3000" rot />
            </g>
          ))}
          <Dim x={1048} y={190} t="12000" />
          <Dim x={1048} y={970} t="12000" />
          <Dim x={658} y={580} t="12000" rot />
          <Dim x={1438} y={580} t="12000" rot />
          <path d="M526 953V932" stroke="#00ff00" strokeWidth="4" />
          <path d="M526 923l5 11h-10z" fill="#00ff00" />
          <path d="M526 953h18" stroke="#ff0000" strokeWidth="4" />
          <path d="M555 953l-11 5v-10z" fill="#ff0000" />
          <circle cx="526" cy="953" r="5.500" fill="#0000b0" />
          <text x="526" y="922" textAnchor="middle" fill="#00ff00" fontSize="13">Y</text>
          <text x="562" y="958" textAnchor="middle" fill="#ff0000" fontSize="13">X</text>
        </g>
      </svg>
      <ViewTools />
    </div>
  );
};

type Layer = { t: string; l: 0 | 1 | 2; a: "on" | "mid" | "off"; faint?: boolean; last?: boolean };
const layers: Layer[] = [
  { t: "所有构件", l: 0, a: "mid" },
  { t: "轴线", l: 1, a: "on", faint: true },
  { t: "轴网", l: 2, a: "on", faint: true },
  { t: "辅助轴线", l: 2, a: "on", faint: true, last: true },
  { t: "柱", l: 1, a: "mid" },
  { t: "柱", l: 2, a: "on" },
  { t: "构造柱", l: 2, a: "on" },
  { t: "砌体柱", l: 2, a: "off", last: true },
  { t: "墙", l: 1, a: "mid" },
  { t: "剪力墙", l: 2, a: "on" },
  { t: "人防门框墙", l: 2, a: "on" },
  { t: "砌体墙", l: 2, a: "on" },
  { t: "砌体加筋", l: 2, a: "off" },
  { t: "保温墙", l: 2, a: "on" },
  { t: "暗梁", l: 2, a: "off" },
  { t: "墙垛", l: 2, a: "off" },
  { t: "幕墙", l: 2, a: "on", last: true },
  { t: "门窗洞", l: 1, a: "mid" },
  { t: "门", l: 2, a: "off" },
  { t: "窗", l: 2, a: "off" },
  { t: "门联窗", l: 2, a: "off" },
  { t: "墙洞", l: 2, a: "off" },
  { t: "带形窗", l: 2, a: "on" },
  { t: "带形洞", l: 2, a: "off" },
  { t: "飘窗", l: 2, a: "off" },
  { t: "老虎窗", l: 2, a: "off" },
  { t: "过梁", l: 2, a: "off" },
  { t: "壁龛", l: 2, a: "off", last: true },
  { t: "梁", l: 1, a: "on" },
  { t: "梁", l: 2, a: "on" },
  { t: "连梁", l: 2, a: "on" },
  { t: "圈梁", l: 2, a: "on", last: true },
  { t: "板", l: 1, a: "mid" },
  { t: "现浇板", l: 2, a: "on" },
];

const Expander = () => (
  <span className="w-[13px] h-[13px] shrink-0 rounded-[2px] border border-[#444] flex items-center justify-center">
    <span className="w-[7px] h-px bg-[#ddd]" />
  </span>
);

const RightPanel = () => (
  <div className="w-[259px] shrink-0 flex flex-col bg-[#5a5a5a] border-l border-[#3a3a3a]">
    <Closer />
    <div className="h-[21px] shrink-0 flex items-center pl-[8px] bg-[#505050] font-bold text-[#f0f0f0]">显示设置</div>
    <div className="h-[30px] shrink-0 bg-[#454545] flex items-end pl-[3px] gap-[5px]">
      <span className="w-[60px] h-[23px] flex items-center justify-center rounded-t-[3px] bg-[#5a5a5a] text-[#eee]">图元显示</span>
      <span className="w-[60px] h-[22px] flex items-center justify-center rounded-t-[3px] bg-[#505050] text-[#8f8f8f]">楼层显示</span>
    </div>
    <div className="flex h-[734px] shrink-0 mt-[4px] ml-[2px] border border-[#333] border-r-0 overflow-hidden">
      <div className="w-[245px] shrink-0">
        <div className="flex h-[19px] pt-px bg-[#636363] text-[#dcdcdc] border-b border-[#4a4a4a]">
          <span className="w-[119px] text-center border-r border-[#4a4a4a]">图层构件</span>
          <span className="w-[63px] text-center border-r border-[#4a4a4a]">显示图元</span>
          <span className="w-[63px] text-center border-r border-[#4a4a4a]">显示名称</span>
        </div>
        {layers.map((r, i) => (
          <div key={i} className="flex h-[21px] items-center border-b border-[#4a4a4a] text-[#e2e2e2]">
            <div className="w-[119px] h-full shrink-0 flex items-center border-r border-[#4a4a4a] whitespace-nowrap">
              {r.l === 0 && <span className="ml-[2px]"><Expander /></span>}
              {r.l === 1 && <span className="ml-[12px]"><Expander /></span>}
              {r.l === 2 &&
                (r.last ? (
                  <span className="ml-[18px] w-[18px] h-[11px] self-start shrink-0 border-l border-b border-[#444]" />
                ) : (
                  <span className="ml-[18px] w-[18px] h-full shrink-0 border-l border-[#444] flex items-center">
                    <span className="w-full h-px bg-[#444]" />
                  </span>
                ))}
              <span className={`pt-px ${r.l === 2 ? "ml-[5px]" : "ml-[6px]"}`}>{r.t}</span>
            </div>
            <div className="w-[63px] h-full shrink-0 flex items-center justify-center border-r border-[#4a4a4a] pr-[2px]">
              <CheckBox on={r.a === "on"} mid={r.a === "mid"} />
            </div>
            <div className="w-[63px] h-full shrink-0 flex items-center justify-center border-r border-[#4a4a4a] pr-[2px]">
              <CheckBox faint={r.faint} />
            </div>
          </div>
        ))}
      </div>
      <div className="flex-1 flex flex-col items-center pt-[3px]">
        <svg width="9" height="5" viewBox="0 0 9 5" className="shrink-0">
          <path d="M0 5h9L4.500 0z" fill="#333" />
        </svg>
        <span className="w-[8px] h-[240px] mt-[4px] rounded-[4px] bg-[#474747]" />
        <svg width="9" height="5" viewBox="0 0 9 5" className="mt-auto mb-[3px] shrink-0">
          <path d="M0 0h9L4.500 5z" fill="#333" />
        </svg>
      </div>
    </div>
    <div className="flex justify-end mt-[8px] pr-px">
      <span className="w-[89px] h-[25px] flex items-center justify-center border border-[#777] bg-[#555] text-[#b8b8b8]">恢复默认设置</span>
    </div>
  </div>
);

const StatusBtn = ({ w, className = "", children }: { w: string; className?: string; children: ReactNode }) => (
  <span className={`${w} h-[24px] shrink-0 flex items-center justify-center bg-[#444444] border border-[#3a3a3a] ${className}`}>{children}</span>
);

const StatusBar = () => (
  <div className="h-[29px] shrink-0 flex items-center bg-[#3a3a3a] text-[#dcdcdc] whitespace-nowrap">
    <span className="ml-[2px] w-[206px] shrink-0 tracking-[0.8px]">X = -3626 Y = 15776</span>
    <span className="w-[80px] shrink-0">层高 : 3</span>
    <span className="w-[133px] shrink-0 tracking-[0.6px]">标高 : -3.05~-0.05</span>
    <span className="w-[103px] shrink-0">0</span>
    <span className="w-[80px] shrink-0">隐藏：&nbsp;0</span>
    <StatusBtn w="w-[25px]">
      <svg width="13" height="13" viewBox="0 0 13 13">
        <path d="M0.500 0v12.500H13M0.500 7h5v5.500" stroke="#ccc" fill="none" />
      </svg>
    </StatusBtn>
    <span className="w-[36px] h-[24px] ml-[3px] shrink-0 flex items-center justify-center gap-[4px] bg-[#23415f] border border-[#3a78b8]">
      <span className="w-[13px] h-[15px] border border-[#4a90e2] flex">
        <span className="w-[5px] h-[5px] -mt-px -ml-px bg-[#f08a30]" />
      </span>
      <Caret />
    </span>
    <StatusBtn w="w-[25px]" className="ml-[3px]">
      <svg width="14" height="14" viewBox="0 0 14 14">
        <path d="M0 0l14 14M14 0L0 14" stroke="#777" />
      </svg>
    </StatusBtn>
    <StatusBtn w="w-[35px]" className="ml-[3px]">
      <svg width="14" height="12" viewBox="0 0 14 12">
        <path d="M12 0L1 11h13" stroke="#ccc" fill="none" />
      </svg>
      <Caret className="ml-[3px]" />
    </StatusBtn>
    <StatusBtn w="w-[35px]" className="ml-[4px]">
      <svg width="15" height="12" viewBox="0 0 15 12">
        <path d="M3 0v6M0 3h6" stroke="#ccc" />
        <rect x="5" y="7" width="9" height="4" fill="#ccc" />
      </svg>
      <Caret className="ml-[3px]" />
    </StatusBtn>
    <StatusBtn w="w-[72px]" className="ml-[4px]">跨图层选择</StatusBtn>
    <StatusBtn w="w-[60px]" className="ml-[4px]">折线选择</StatusBtn>
    <span className="ml-[4px]">选择柱、墙、梁图元，按右键确认或ESC取消</span>
    <span className="ml-auto mr-[4px]">66.6667 FPS</span>
  </div>
);

const Taskbar = () => (
  <div className="h-[16px] shrink-0 border-t border-white bg-[#12222a] flex overflow-hidden">
    <span className="ml-[16px] w-[16px] mt-[11px] h-[10px] bg-white shrink-0 [clip-path:polygon(0_30%,100%_0,100%_100%,0_100%)]" />
    <div className="ml-[16px] w-[344px] h-full bg-[#f2f2f2] shrink-0 flex overflow-hidden text-[#222]">
      <span className="ml-[10px] mt-[12px] w-[20px] h-[20px] rounded-full border-2 border-[#222] shrink-0" />
      <span className="ml-[14px] mt-[12px] leading-[16px] whitespace-nowrap">在这里输入你要搜索的内容</span>
      <span className="ml-auto mr-[14px] mt-[12px] w-[6px] h-[6px] border border-[#222] shrink-0" />
    </div>
    <span className="ml-[16px] mt-[12px] w-[15px] h-[6px] border-t-2 border-x border-white shrink-0" />
    <span className="ml-[35px] mt-[11px] w-[17px] h-[17px] rounded-full bg-[#1380d8] shrink-0" />
    <div className="ml-[17px] w-[48px] bg-[#3c4a50] shrink-0 flex justify-center">
      <span className="mt-[7px] w-[25px] h-[20px] rounded-[3px] bg-[#6aaef0] shrink-0" />
    </div>
    <span className="ml-[13px] mt-[10px] w-[23px] h-[23px] rounded-full border-[5px] border-[#ddd] shrink-0" />
    <div className="ml-auto flex items-start w-[388px] shrink-0">
      <span className="mt-[12px] ml-[8px] w-[6px] h-[6px] rounded-full border border-[#ddd] shrink-0" />
      <span className="mt-[11px] ml-[22px] w-[14px] h-[14px] rounded-full bg-[#1e88e5] shrink-0" />
      <span className="mt-[11px] ml-[10px] w-[16px] h-[14px] rounded-[3px] bg-white shrink-0" />
      <span className="mt-[11px] ml-[8px] w-[12px] h-[12px] rounded-full bg-[#8bc34a] shrink-0" />
      <span className="mt-[12px] ml-[17px] w-[6px] h-[6px] border border-[#ddd] shrink-0" />
      <span className="mt-[11px] ml-[15px] w-[11px] h-[11px] rounded-full bg-[#1e88e5] shrink-0" />
      <span className="mt-[12px] ml-[13px] w-[12px] h-[6px] bg-[#ddd] shrink-0" />
      <span className="mt-[13px] ml-[11px] w-[3px] h-[6px] bg-[#ddd] shrink-0" />
      <span className="mt-[13px] ml-[93px] w-[12px] h-[6px] border border-[#ddd] shrink-0" />
      <span className="ml-[26px] mt-[3px] text-[#ddd] text-[12px] leading-[14px] shrink-0">13:31</span>
      <span className="ml-[35px] mt-[11px] w-[15px] h-[12px] border-2 border-white shrink-0" />
    </div>
  </div>
);

const Annotations = () => (
  <svg width="1912" height="1049" viewBox="0 0 1912 1049" className="absolute left-0 top-0 pointer-events-none">
    <g fill="#f23a3a">
      <polygon points="112,75 143,79.600 136.800,83.300 208,120 134.200,88.700 135.400,95.800" />
      <polygon points="488,80 509.500,95.100 503.300,96 535,142 499.300,99 496.700,104.700" />
      <polygon points="546,149 561.400,170.300 555.600,169 563,201 550,170.800 546.200,175.300" />
    </g>
  </svg>
);

export default function App() {
  return (
    <div className="relative w-[1912px] h-[1049px] flex flex-col overflow-hidden bg-[#5a5a5a] text-[12px] leading-[16px] font-['Noto_Sans_CJK_SC','Liberation_Sans',sans-serif]">
      <TitleBar />
      <Ribbon />
      <FilterBar />
      <div className="flex-1 flex min-h-0">
        <LeftPanel />
        <MidPanel />
        <Canvas />
        <div className="w-[4px] shrink-0 flex flex-col">
          <span className="h-[471px] bg-[#474747]" />
        </div>
        <RightPanel />
      </div>
      <StatusBar />
      <Taskbar />
      <Annotations />
    </div>
  );
}
